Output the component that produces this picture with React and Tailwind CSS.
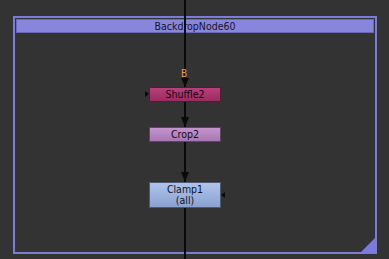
const nodeFont = { fontFamily: '"DejaVu Sans Condensed", "DejaVu Sans", "Liberation Sans", sans-serif' }

function Arrow({ left, top, h }) {
  return (
    <svg className="absolute" style={{ left, top }} width="8" height={h} viewBox={`0 0 8 ${h}`}>
      <polygon points={`0,0 8,0 4,${h}`} fill="#0a0a0a" />
    </svg>
  )
}

export default function App() {
  return (
    <div className="relative w-[389px] h-[259px] overflow-hidden bg-[#333333] pt-[16px] pl-[13px]" style={nodeFont}>
      {/* backdrop */}
      <div className="relative w-[364px] h-[238px] border-2 border-[#7d7bd8] p-px">
        <div className="h-[14px] bg-[#8886dc] border border-[#6a68b8] flex items-center justify-center text-[10.5px] leading-none text-[#15152a]">
          BackdropNode60
        </div>
        <svg className="absolute right-0 bottom-0" width="14" height="14" viewBox="0 0 14 14">
          <polygon points="0,14 14,0 14,14" fill="#7d7bd8" />
        </svg>
      </div>

      {/* pipe */}
      <div className="absolute left-[184px] top-0 w-[2px] h-[259px] bg-[#0a0a0a]" />

      <Arrow left={181} top={78} h={9} />
      <Arrow left={181} top={117} h={10} />
      <Arrow left={181} top={172} h={10} />

      {/* B label */}
      <div className="absolute left-[181px] top-[69px] text-[10px] leading-none text-[#e8a050]">B</div>

      {/* Shuffle2 */}
      <svg className="absolute left-[145px] top-[91px]" width="4" height="6" viewBox="0 0 4 6">
        <polygon points="0,0 4,3 0,6" fill="#0a0a0a" />
      </svg>
      <div className="absolute left-[149px] top-[87px] w-[72px] h-[15px] border border-[#5a1838] bg-gradient-to-b from-[#b8407a] to-[#9a2c60] flex items-center justify-center text-[10.5px] leading-none text-[#14060e]">
        Shuffle2
      </div>

      {/* Crop2 */}
      <div className="absolute left-[149px] top-[127px] w-[72px] h-[15px] border border-[#5e4466] bg-gradient-to-b from-[#c496cc] to-[#a876b4] flex items-center justify-center text-[10.5px] leading-none text-[#140a1a]">
        Crop2
      </div>

      {/* Clamp1 */}
      <div className="absolute left-[149px] top-[182px] w-[72px] h-[26px] border border-[#4a5a78] bg-gradient-to-b from-[#b0c4ea] to-[#8aa2d2] flex flex-col items-center justify-center text-[10.5px] leading-[11px] text-[#0c1424]">
        <span>Clamp1</span>
        <span>(all)</span>
      </div>
      <svg className="absolute left-[221px] top-[192px]" width="4" height="6" viewBox="0 0 4 6">
        <polygon points="4,0 0,3 4,6" fill="#0a0a0a" />
      </svg>
    </div>
  )
}
